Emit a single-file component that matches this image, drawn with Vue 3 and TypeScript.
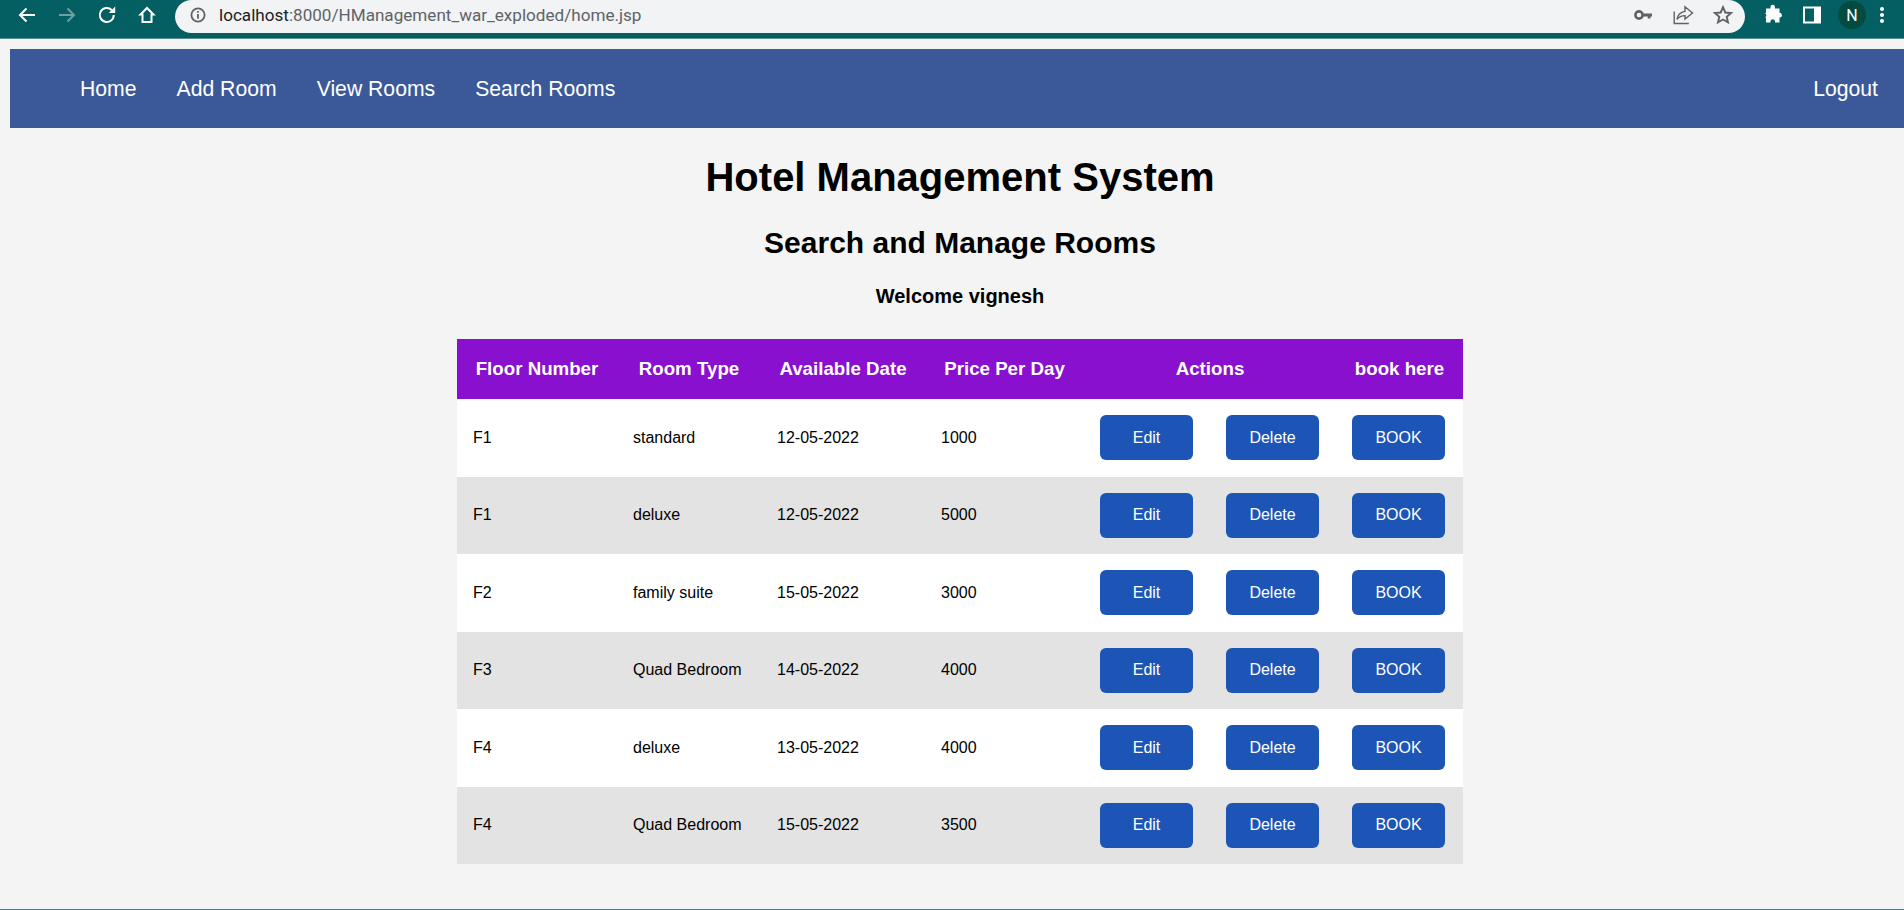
<script setup lang="ts">
interface Room { floor: string; type: string; date: string; price: string }
const rooms: Room[] = [
  { floor: 'F1', type: 'standard', date: '12-05-2022', price: '1000' },
  { floor: 'F1', type: 'deluxe', date: '12-05-2022', price: '5000' },
  { floor: 'F2', type: 'family suite', date: '15-05-2022', price: '3000' },
  { floor: 'F3', type: 'Quad Bedroom', date: '14-05-2022', price: '4000' },
  { floor: 'F4', type: 'deluxe', date: '13-05-2022', price: '4000' },
  { floor: 'F4', type: 'Quad Bedroom', date: '15-05-2022', price: '3500' },
]
</script>

<template>
  <div class="page">
    <header class="chrome">
      <div class="chrome-nav">
        <span class="slot"><svg class="ic" viewBox="0 0 24 24"><path d="M20 12H5.500M11.500 5.500 5 12l6.500 6.500" fill="none" stroke="#fff" stroke-width="2"/></svg></span>
        <span class="slot"><svg class="ic" viewBox="0 0 24 24"><path d="M4 12h14.500M12.500 5.500 19 12l-6.500 6.500" fill="none" stroke="#6f9fa1" stroke-width="2"/></svg></span>
        <span class="slot"><svg class="ic" viewBox="0 0 24 24"><path d="M18.800 12a7 7 0 1 1-2.100-5" fill="none" stroke="#fff" stroke-width="2"/><path d="M13.800 10h6.400V3.600z" fill="#fff"/></svg></span>
        <span class="slot"><svg class="ic" viewBox="0 0 24 24"><path d="M12 5 5.500 11.500H7.500v7.500h9v-7.500h2z" fill="none" stroke="#fff" stroke-width="2"/></svg></span>
      </div>
      <div class="omnibox">
        <svg class="info" viewBox="0 0 16 16"><circle cx="8" cy="8" r="6.600" fill="none" stroke="#5f6368" stroke-width="1.800"/><path d="M7.100 7h1.800v4.800H7.100zM7.100 4h1.800v1.800H7.100z" fill="#5f6368"/></svg>
        <span class="url"><span class="host">localhost</span>:8000/HManagement_war_exploded/home.jsp</span>
        <div class="omni-actions">
          <svg class="ic" viewBox="0 0 24 24"><circle cx="8" cy="12" r="3.600" fill="none" stroke="#5f6368" stroke-width="2.600"/><path d="M11 10.400h10v3.200h-1.500v2h-2.800v-2H11z" fill="#5f6368"/></svg>
          <svg class="ic" viewBox="0 0 24 24"><path d="M14 3.800 21.500 10 14 16v-3.400c-3.500 0-6 1-8 3.800.6-4.300 3.300-7.200 8-8z" fill="none" stroke="#5f6368" stroke-width="1.400"/><path d="M3.200 8.500v12h14.600" fill="none" stroke="#5f6368" stroke-width="1.400"/></svg>
          <svg class="ic" viewBox="0 0 24 24"><path d="m12 4.200 2.300 5.300 5.800.5-4.400 3.800 1.300 5.600L12 16.500l-5 2.900 1.300-5.600L3.900 10l5.800-.5z" fill="none" stroke="#5f6368" stroke-width="1.900"/></svg>
        </div>
      </div>
      <div class="chrome-right">
        <span class="slot"><svg class="ic" viewBox="0 0 24 24"><path d="M10 5.500a2.200 2.200 0 0 1 4.400 0V7h4.600v4.500h-.5a2.300 2.300 0 0 1 1.200 4.500H19v5h-4.500v-1.500a2.300 2.300 0 0 0-4.500 0V21H5.500v-5H4a2.300 2.300 0 0 0 0-4.500h1.500V7H10z" transform="translate(.5 -1.500)" fill="#fff"/></svg></span>
        <span class="slot"><svg class="ic" viewBox="0 0 24 24"><path d="M3 3.500h18v17H3z" fill="#fff"/><path d="M5 5.500h9v13H5z" fill="#045f63"/></svg></span>
        <span class="slot"><span class="avatar">N</span></span>
        <span class="menu"><i></i><i></i><i></i></span>
      </div>
    </header>

    <nav class="topnav">
      <div class="links">
        <a>Home</a><a>Add Room</a><a>View Rooms</a><a>Search Rooms</a>
      </div>
      <a>Logout</a>
    </nav>

    <main class="content">
      <h1>Hotel Management System</h1>
      <h2>Search and Manage Rooms</h2>
      <h3>Welcome vignesh</h3>
      <table>
        <colgroup>
          <col class="c1" /><col class="c2" /><col class="c3" /><col class="c4" /><col class="c5" /><col class="c6" /><col class="c7" />
        </colgroup>
        <thead>
          <tr>
            <th>Floor Number</th><th>Room Type</th><th>Available Date</th><th>Price Per Day</th>
            <th colspan="2">Actions</th><th>book here</th>
          </tr>
        </thead>
        <tbody>
          <tr v-for="(r, i) in rooms" :key="i">
            <td>{{ r.floor }}</td><td>{{ r.type }}</td><td>{{ r.date }}</td><td>{{ r.price }}</td>
            <td><button>Edit</button></td><td><button>Delete</button></td><td><button>BOOK</button></td>
          </tr>
        </tbody>
      </table>
    </main>
  </div>
</template>

<style>
html, body { margin: 0; background: #f4f4f4; overflow: hidden; }
</style>

<style scoped>
.page {
  height: 910px;
  box-sizing: border-box;
  display: flex;
  flex-direction: column;
  font-family: "Liberation Sans", Arial, sans-serif;
  background: #f4f4f4;
  border-bottom: 1px solid #4a7a7d;
  color: #000;
}
.chrome {
  height: 38px;
  flex: none;
  display: flex;
  align-items: flex-start;
  background: #045f63;
  border-bottom: 1px solid #5c8f92;
}
.chrome-nav { display: flex; padding-left: 7px; width: 175px; box-sizing: border-box; }
.slot { width: 40px; height: 30px; flex: none; display: flex; align-items: center; justify-content: center; }
.ic { width: 24px; height: 24px; flex: none; display: block; }
.omnibox {
  flex: none;
  width: 570px;
  flex-grow: 1;
  height: 33px;
  box-sizing: border-box;
  background: #f1f3f4;
  border-radius: 17px;
  display: flex;
  align-items: center;
  padding: 0 10px 3px 15px;
}
.info { width: 16px; height: 16px; flex: none; }
.url { font-family: Roboto, "Liberation Sans", sans-serif; font-size: 17.1px; color: #5f6368; margin-left: 13px; }
.host { color: #202124; }
.omni-actions { margin-left: auto; display: flex; gap: 16px; }
.chrome-right { flex: none; width: 159px; box-sizing: border-box; display: flex; align-items: center; padding-left: 7px; height: 30px; }
.avatar {
  width: 28px; height: 28px; border-radius: 50%; background: #034a40; color: #fff;
  font: 16px Roboto, sans-serif; display: flex; align-items: center; justify-content: center;
}
.menu { display: flex; flex-direction: column; gap: 2px; margin-left: 8px; }
.menu i { width: 4px; height: 4px; border-radius: 50%; background: #fff; display: block; }

.topnav {
  flex: none;
  margin: 10px 0 0 10px;
  height: 79px;
  box-sizing: border-box;
  padding: 0 26px 0 70px;
  background: #3b5998;
  display: flex;
  justify-content: space-between;
  align-items: center;
  color: #fff;
  font-size: 21.2px;
}
.links { display: flex; gap: 40px; }

.content { display: flex; flex-direction: column; align-items: center; padding-left: 16px; }
h1 { font-size: 40px; line-height: 46px; margin: 26px 0 0; }
h2 { font-size: 30px; line-height: 35px; margin: 25px 0 0; }
h3 { font-size: 20px; line-height: 23px; margin: 25px 0 0; }
table {
  width: 1006px;
  margin-top: 31px;
  border-collapse: collapse;
  table-layout: fixed;
}
.c1 { width: 160px; } .c2 { width: 144px; } .c3 { width: 164px; } .c4 { width: 159px; }
.c5 { width: 126px; } .c6 { width: 126px; } .c7 { width: 127px; }
th {
  background: #8a10cf;
  color: #fff;
  font-size: 18.72px;
  height: 60px;
  padding: 0;
  text-align: center;
}
td { padding: 16.25px 16px; font-size: 16px; background: #fff; height: 45px; }
tbody tr:nth-child(even) td { background: #e3e3e3; }
button {
  width: 93px;
  height: 45px;
  border: 0;
  border-radius: 6px;
  background: #1c55b5;
  color: #fff;
  font: 16px "Liberation Sans", Arial, sans-serif;
  padding: 0;
  display: block;
}
</style>
